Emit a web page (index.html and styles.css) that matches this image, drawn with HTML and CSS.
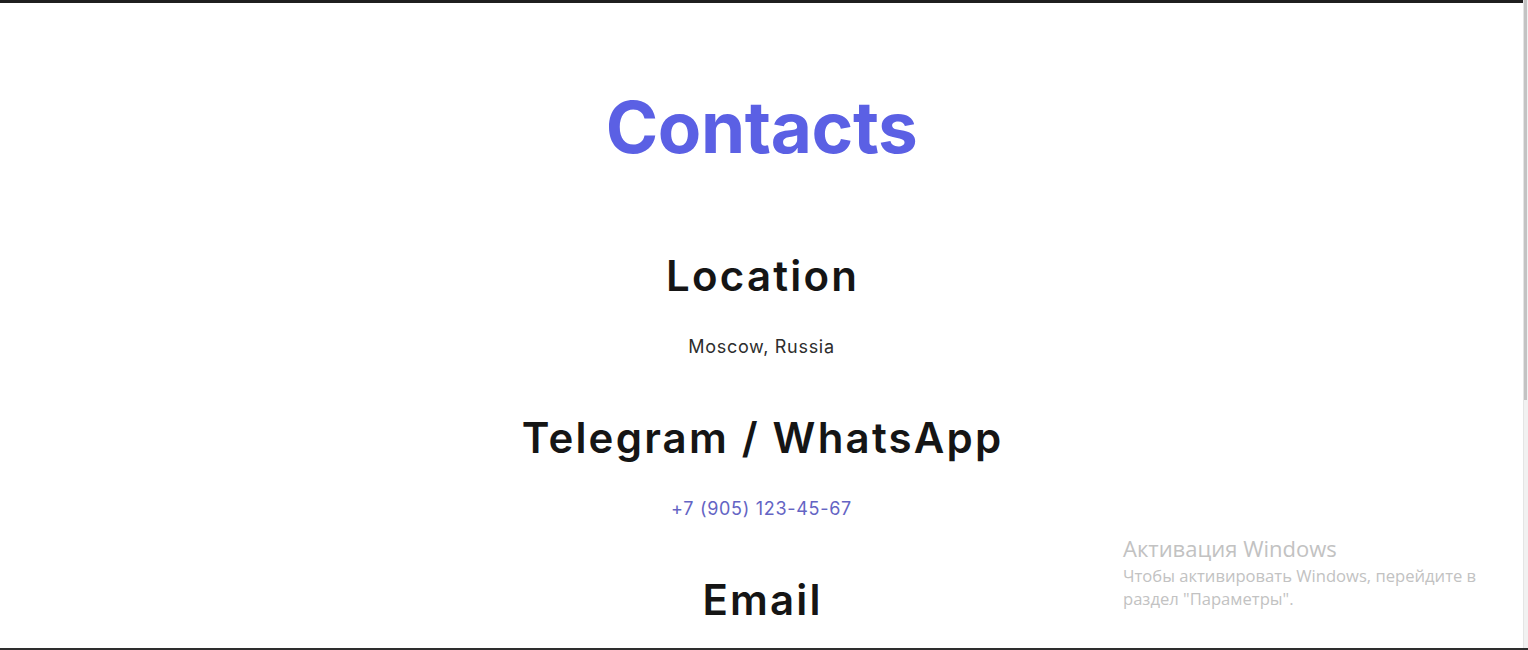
FILE: index.html
```html
<!DOCTYPE html>
<html lang="en">
<head>
<meta charset="utf-8">
<title>Contacts</title>
<link rel="stylesheet" href="styles.css">
</head>
<body>
<div class="window">
  <main class="page">
    <section class="contacts">
      <h1 class="title">Contacts</h1>
      <div class="item">
        <h2 class="item-title">Location</h2>
        <p class="item-text">Moscow, Russia</p>
      </div>
      <div class="item">
        <h2 class="item-title">Telegram / WhatsApp</h2>
        <p class="item-text"><a class="link" href="#">+7 (905) 123-45-67</a></p>
      </div>
      <div class="item">
        <h2 class="item-title">Email</h2>
      </div>
    </section>
  </main>
  <div class="scrollbar"><div class="thumb"></div></div>
  <div class="watermark">
    <div class="wm-title">Активация Windows</div>
    <div class="wm-text">Чтобы активировать Windows, перейдите в<br>раздел "Параметры".</div>
  </div>
</div>
</body>
</html>
```
FILE: styles.css
```css
* { box-sizing: border-box; }
html, body { margin: 0; padding: 0; background: #fff; }
body { font-family: Inter, "Noto Sans", sans-serif; overflow: hidden; }
.window {
  position: relative;
  height: 650px;
  display: flex;
  border-bottom: 2px solid #2e2e2e;
  overflow: hidden;
}
.page {
  flex: 1;
  border-top: 3px solid #1f1f1f;
  overflow: hidden;
}
.scrollbar {
  width: 5px;
  background: #f1f1f1;
  border-left: 1px solid #e4e4e4;
}
.thumb {
  width: 3px;
  height: 400px;
  background: #c3c3c3;
}
.contacts {
  display: flex;
  flex-direction: column;
  align-items: center;
  padding-top: 81px;
}
.title {
  margin: 0 0 82px;
  font-size: 71px;
  line-height: 86px;
  font-weight: 700;
  color: #5b60e4;
  letter-spacing: -0.4px;
}
.item {
  display: flex;
  flex-direction: column;
  align-items: center;
  margin-bottom: 55px;
}
.item-title {
  margin: 0;
  font-size: 42px;
  line-height: 48px;
  font-weight: 600;
  color: #151515;
  letter-spacing: 2.2px;
  text-indent: 2.2px;
}
.item-text {
  margin: 35px 0 0;
  font-size: 18px;
  line-height: 24px;
  color: #2d2d2d;
  letter-spacing: 0.7px;
}
.link { color: #6464c4; text-decoration: none; }
.watermark {
  position: absolute;
  left: 1123px;
  top: 533px;
  font-family: "Open Sans", "Noto Sans", sans-serif;
  color: #c2c2c2;
}
.wm-title { font-size: 22px; line-height: 30px; }
.wm-text { font-size: 16.6px; line-height: 23px; margin-top: 1px; }
```
